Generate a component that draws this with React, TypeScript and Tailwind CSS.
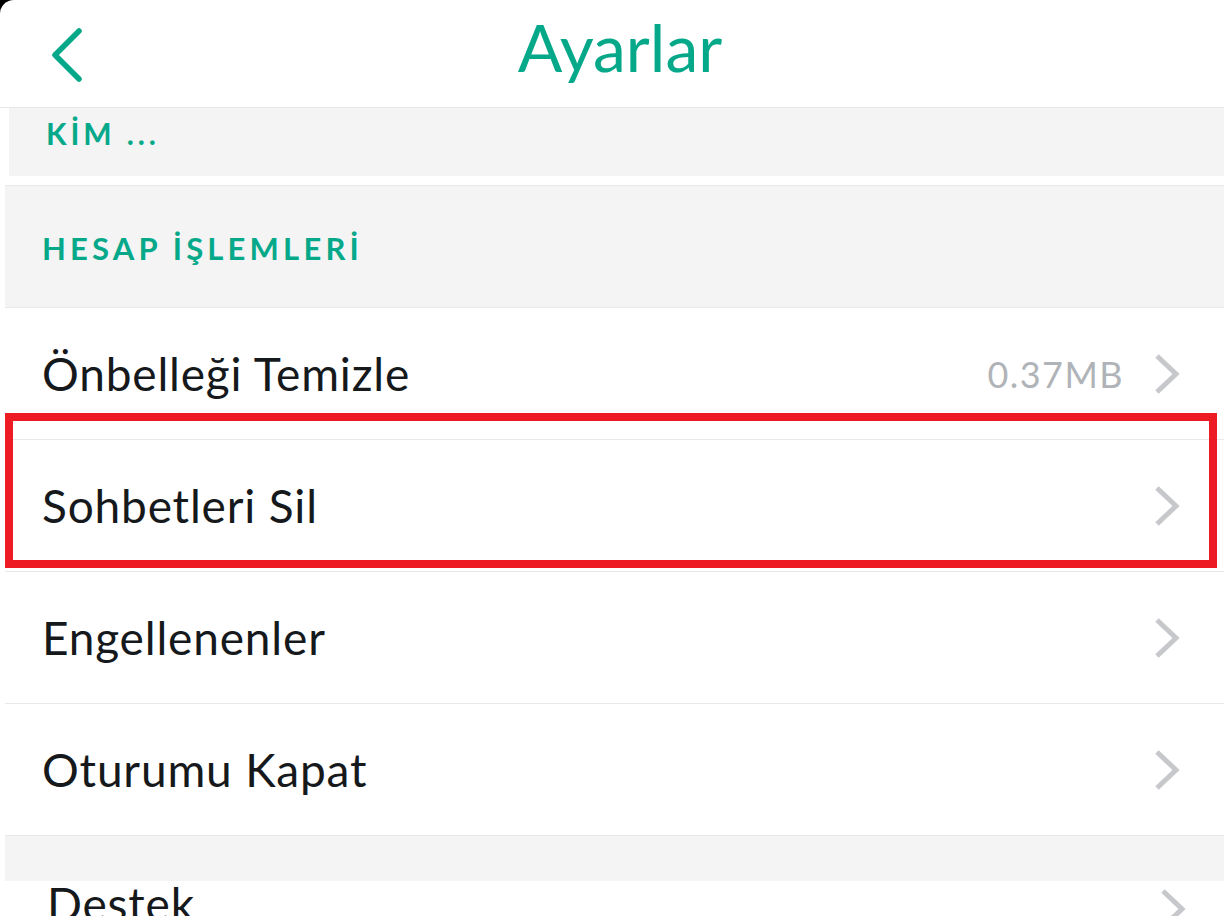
const rows = [
  { label: "Önbelleği Temizle", value: "0.37MB" },
  { label: "Sohbetleri Sil" },
  { label: "Engellenenler" },
  { label: "Oturumu Kapat" },
]

function Chevron() {
  return (
    <svg width="26" height="40" viewBox="0 0 26 40" className="shrink-0">
      <polyline points="3,2 22,20 3,38" fill="none" stroke="#c6c8cb" strokeWidth="5" />
    </svg>
  )
}

export default function App() {
  return (
    <div className="w-[1224px] h-[916px] overflow-hidden bg-black relative font-['Lato',sans-serif]">
      <div className="h-full bg-white rounded-tl-[14px] flex flex-col">
        {/* header */}
        <div className="h-[108px] shrink-0 grid grid-cols-[1fr_auto_1fr] items-center border-b border-[#e9e9e9]">
          <div className="pl-[48px] pt-[4px]">
            <svg width="36" height="58" viewBox="0 0 36 58">
              <polyline points="31,4 7,28 31,52" fill="none" stroke="#05a98a" strokeWidth="5.5" strokeLinecap="round" strokeLinejoin="round" />
            </svg>
          </div>
          <h1 className="pl-[16px] text-[66px] leading-none text-[#05a98a] pb-[14px]">Ayarlar</h1>
          <div />
        </div>

        {/* KİM section */}
        <div className="ml-[9px] h-[68px] shrink-0 bg-[#f4f4f4] pl-[37px] pt-[3px]">
          <span className="text-[30px] font-bold tracking-[0.13em] text-[#05a98a]">KİM ...</span>
        </div>
        <div className="h-[9px] shrink-0" />

        {/* HESAP section */}
        <div className="ml-[5px] h-[122px] shrink-0 bg-[#f4f4f4] border-t border-[#e9e9e9] flex items-center pl-[37px] pt-[4px]">
          <span className="text-[31px] font-bold tracking-[0.135em] text-[#05a98a]">HESAP İŞLEMLERİ</span>
        </div>

        {rows.map((row) => (
          <div
            key={row.label}
            className="ml-[5px] h-[132px] shrink-0 bg-white border-t border-[#e9e9e9] flex items-center pl-[37px] pr-[44px]"
          >
            <span className="flex-1 text-[46px] tracking-[0.018em] text-[#16191c]">{row.label}</span>
            {row.value && (
              <span className="text-[36px] tracking-[0.04em] text-[#b0b4b8] mr-[30px]">{row.value}</span>
            )}
            <Chevron />
          </div>
        ))}

        <div className="ml-[5px] h-[46px] shrink-0 bg-[#f4f4f4] border-t border-[#e9e9e9]" />

        <div className="ml-[9px] flex-1 bg-white flex items-start pl-[38px] pr-[38px]">
          <span className="flex-1 text-[46px] leading-none tracking-[0.018em] text-[#16191c]">Destek</span>
          <div className="pt-[8px]">
            <Chevron />
          </div>
        </div>
      </div>

      {/* annotation box */}
      <div className="absolute left-[5px] top-[413px] w-[1212px] h-[155px] border-[8px] border-[#ed1c24]" />
    </div>
  )
}
